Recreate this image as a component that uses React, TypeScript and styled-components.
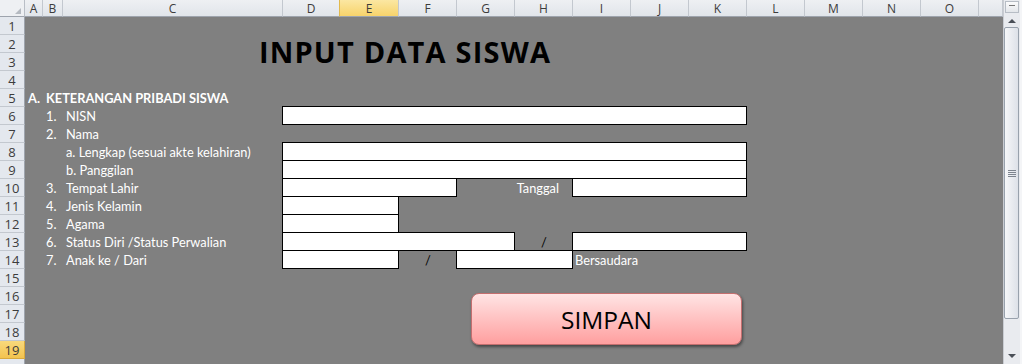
import React from "react"
import styled, { createGlobalStyle, css } from "styled-components"

const GlobalStyle = createGlobalStyle`
    html, body {
        margin: 0;
        padding: 0;
        background: #808080;
        overflow: hidden;
    }
`

const letters = ["A", "B", "C", "D", "E", "F", "G", "H", "I", "J", "K", "L", "M", "N", "O"]
const widths = [18, 20, 220, 57, 59, 58, 58, 58, 58, 58, 58, 58, 58, 58, 58]
const col = (l: string) => letters.indexOf(l) + 2

type Place = { $c: number; $span?: number; $r: number; $rspan?: number }

const placed = css<Place>`
    grid-column: ${p => p.$c} / span ${p => p.$span ?? 1};
    grid-row: ${p => p.$r + 1} / span ${p => p.$rspan ?? 1};
`

const App = () => {
    return (
        <Window>
            <GlobalStyle />
            <Sheet>
                <Corner />
                {letters.map(l => (
                    <ColHead key={l} $active={l === "E"}>
                        {l}
                    </ColHead>
                ))}
                <ColHead />
                {Array.from({ length: 19 }, (_, i) => (
                    <RowHead key={i} style={{ gridRow: i + 2 }} $active={i + 1 === 19}>
                        {i + 1}
                    </RowHead>
                ))}
                <RowHead style={{ gridRow: 21 }} />

                <Title $c={col("C")} $span={9} $r={2} $rspan={2}>
                    INPUT DATA SISWA
                </Title>

                <Text $c={col("A")} $r={5} $bold>A.</Text>
                <Text $c={col("B")} $span={3} $r={5} $bold>KETERANGAN PRIBADI SISWA</Text>

                <Text $c={col("B")} $r={6}>1.</Text>
                <Text $c={col("C")} $r={6}>NISN</Text>
                <Field $c={col("D")} $span={8} $r={6} />

                <Text $c={col("B")} $r={7}>2.</Text>
                <Text $c={col("C")} $r={7}>Nama</Text>

                <Text $c={col("C")} $r={8}>a. Lengkap (sesuai akte kelahiran)</Text>
                <Field $c={col("D")} $span={8} $r={8} />

                <Text $c={col("C")} $r={9}>b. Panggilan</Text>
                <Field $c={col("D")} $span={8} $r={9} />

                <Text $c={col("B")} $r={10}>3.</Text>
                <Text $c={col("C")} $r={10}>Tempat Lahir</Text>
                <Field $c={col("D")} $span={3} $r={10} />
                <Text $c={col("G")} $span={2} $r={10} $align="end" $pad="0 14px 0 0">Tanggal</Text>
                <Field $c={col("I")} $span={3} $r={10} />

                <Text $c={col("B")} $r={11}>4.</Text>
                <Text $c={col("C")} $r={11}>Jenis Kelamin</Text>
                <Field $c={col("D")} $span={2} $r={11} />

                <Text $c={col("B")} $r={12}>5.</Text>
                <Text $c={col("C")} $r={12}>Agama</Text>
                <Field $c={col("D")} $span={2} $r={12} />

                <Text $c={col("B")} $r={13}>6.</Text>
                <Text $c={col("C")} $r={13}>Status Diri /Status Perwalian</Text>
                <Field $c={col("D")} $span={4} $r={13} />
                <Slash $c={col("H")} $r={13}>/</Slash>
                <Field $c={col("I")} $span={3} $r={13} />

                <Text $c={col("B")} $r={14}>7.</Text>
                <Text $c={col("C")} $r={14}>Anak ke / Dari</Text>
                <Field $c={col("D")} $span={2} $r={14} />
                <Slash $c={col("F")} $r={14}>/</Slash>
                <Field $c={col("G")} $span={2} $r={14} />
                <Text $c={col("I")} $span={2} $r={14} $pad="0 0 0 2px">Bersaudara</Text>

                <SaveButton $c={col("G")} $span={5} $r={16} $rspan={4}>
                    SIMPAN
                </SaveButton>
            </Sheet>
            <ScrollBar>
                <SplitBox />
                <ArrowButton>
                    <Arrow $up />
                </ArrowButton>
                <Track>
                    <Thumb>
                        <Grip />
                    </Thumb>
                </Track>
                <ArrowButton>
                    <Arrow />
                </ArrowButton>
            </ScrollBar>
        </Window>
    )
}

export default App

const Window = styled.div`
    display: flex;
    width: 1022px;
    height: 364px;
    overflow: hidden;
    background: #808080;
`

const Sheet = styled.div`
    flex: 1;
    display: grid;
    grid-template-columns: 25px ${widths.map(w => w + "px").join(" ")} 1fr;
    grid-template-rows: 17px repeat(20, 18px);
    background: #808080;
    font-family: Lato, "Open Sans", sans-serif;
`

const headBase = css`
    display: flex;
    align-items: center;
    justify-content: center;
    box-sizing: border-box;
    font-family: "Open Sans", sans-serif;
    font-size: 12px;
    color: #3c3c3c;
`

const Corner = styled.div`
    position: relative;
    grid-column: 1;
    grid-row: 1;
    box-sizing: border-box;
    background: #eef0f3;
    border-right: 1px solid #b9bec6;
    border-bottom: 1px solid #9ea4ad;

    &::after {
        content: "";
        position: absolute;
        right: 3px;
        bottom: 2px;
        border-left: 6px solid transparent;
        border-bottom: 6px solid #b5bac1;
    }
`

const ColHead = styled.div<{ $active?: boolean }>`
    ${headBase};
    grid-row: 1;
    border-right: 1px solid #c3c8cf;
    border-bottom: 1px solid #9ea4ad;
    background: ${p =>
        p.$active
            ? "linear-gradient(#fbe7a2, #f7d36b)"
            : "linear-gradient(#eef0f3, #e1e5ea)"};
    ${p => p.$active && "border-left: 1px solid #e2b94c; margin-left: -1px;"}
`

const RowHead = styled.div<{ $active?: boolean }>`
    ${headBase};
    grid-column: 1;
    font-size: 13px;
    border-right: 1px solid #9ea4ad;
    border-bottom: 1px solid #c3c8cf;
    background: ${p => (p.$active ? "linear-gradient(#f9d97c, #f3c34f)" : "#e4e8ee")};
    ${p => p.$active && "border-color: #d9a93d;"}
`

const Title = styled.div<Place>`
    ${placed};
    display: flex;
    align-items: center;
    justify-content: center;
    padding-bottom: 4px;
    font-family: "Open Sans", sans-serif;
    font-weight: 700;
    font-size: 29px;
    letter-spacing: 1.2px;
    color: #000;
    white-space: nowrap;
`

const Text = styled.div<Place & { $bold?: boolean; $align?: string; $pad?: string }>`
    ${placed};
    display: flex;
    align-items: flex-end;
    justify-content: ${p => p.$align ?? "flex-start"};
    padding: ${p => p.$pad ?? "0 0 0 3px"};
    padding-bottom: 2px;
    font-size: 12.8px;
    line-height: 14px;
    font-weight: ${p => (p.$bold ? 700 : 400)};
    color: #fff;
    white-space: nowrap;
`

const Slash = styled(Text)`
    justify-content: center;
    padding: 0 0 2px 0;
    color: #000;
`

const Field = styled.div<Place>`
    ${placed};
    margin: -1px 0 0 -1px;
    height: 19px;
    background: #fff;
    border: 1px solid #000;
    box-sizing: border-box;
`

const SaveButton = styled.div<Place>`
    ${placed};
    margin: 6px 5px 0 14px;
    height: 52px;
    display: flex;
    align-items: center;
    justify-content: center;
    box-sizing: border-box;
    border: 1px solid #c46f6f;
    border-radius: 8px;
    background: linear-gradient(#ffe4e4, #ff9f9f);
    box-shadow: 1px 2px 3px rgba(0, 0, 0, 0.45);
    font-family: "Open Sans", sans-serif;
    font-size: 24.5px;
    color: #000;
`

const ScrollBar = styled.div`
    width: 19px;
    display: flex;
    flex-direction: column;
    background: #e9ebef;
    border-left: 1px solid #c9ccd2;
    border-right: 2px solid #f4f5f7;
    box-sizing: border-box;
`

const SplitBox = styled.div`
    height: 10px;
    margin: 1px 1px 0;
    border: 1px solid #b7bdc5;
    background: linear-gradient(#fbfbfc, #e3e6ea);
    position: relative;

    &::after {
        content: "";
        position: absolute;
        left: 3px;
        right: 3px;
        top: 3px;
        height: 1px;
        background: #777;
    }
`

const ArrowButton = styled.div`
    height: 16px;
    display: flex;
    align-items: center;
    justify-content: center;
`

const Arrow = styled.div<{ $up?: boolean }>`
    width: 0;
    height: 0;
    border-left: 4px solid transparent;
    border-right: 4px solid transparent;
    ${p =>
        p.$up
            ? "border-bottom: 4px solid #4a4f57;"
            : "border-top: 4px solid #4a4f57;"}
`

const Track = styled.div`
    flex: 1;
    display: flex;
    flex-direction: column;
`

const Thumb = styled.div`
    height: 292px;
    margin: -2px 1px 0 0;
    display: flex;
    align-items: center;
    justify-content: center;
    box-sizing: border-box;
    border: 1px solid #98a1ac;
    border-radius: 2px;
    background: linear-gradient(90deg, #f6f7f9, #dde1e8);
`

const Grip = styled.div`
    width: 8px;
    height: 7px;
    background: repeating-linear-gradient(#7d848e 0 1px, transparent 1px 2px);
`
